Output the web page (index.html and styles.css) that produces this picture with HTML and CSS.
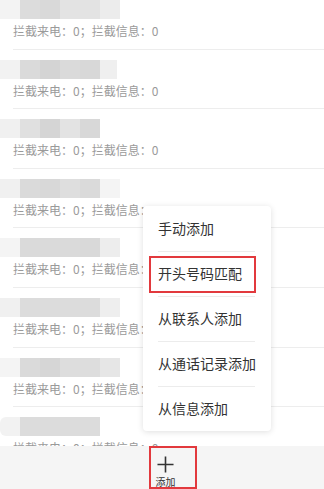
FILE: index.html
```html
<!DOCTYPE html>
<html lang="zh-CN">
<head>
<meta charset="utf-8">
<title>拦截名单</title>
<link rel="stylesheet" href="styles.css">
</head>
<body>
<div class="page">
  <div class="list-wrap">
    <ul class="list">
      <li class="row"><div class="name n1"></div><div class="stat">拦截来电：0；拦截信息：0</div></li>
      <li class="row"><div class="name n2"></div><div class="stat">拦截来电：0；拦截信息：0</div></li>
      <li class="row"><div class="name n3"></div><div class="stat">拦截来电：0；拦截信息：0</div></li>
      <li class="row"><div class="name n4"></div><div class="stat">拦截来电：0；拦截信息：0</div></li>
      <li class="row"><div class="name n5"></div><div class="stat">拦截来电：0；拦截信息：0</div></li>
      <li class="row"><div class="name n6"></div><div class="stat">拦截来电：0；拦截信息：0</div></li>
      <li class="row"><div class="name n7"></div><div class="stat">拦截来电：0；拦截信息：0</div></li>
      <li class="row"><div class="name n8"></div><div class="stat">拦截来电：0；拦截信息：0</div></li>
    </ul>
  </div>
  <div class="bar">
    <div class="add">
      <svg class="plus" viewBox="0 0 18 18" width="17" height="17" aria-hidden="true">
        <path d="M9 0.5V17.5M0.5 9H17.5" stroke="#333" stroke-width="1.7" fill="none"/>
      </svg>
      <span class="add-label">添加</span>
    </div>
  </div>
  <div class="menu">
    <div class="item">手动添加</div>
    <div class="item">开头号码匹配<span class="mark"></span></div>
    <div class="item">从联系人添加</div>
    <div class="item">从通话记录添加</div>
    <div class="item">从信息添加</div>
  </div>
</div>
</body>
</html>
```
FILE: styles.css
```css
* { box-sizing: border-box; }
html, body { margin: 0; padding: 0; background: #fff; }
body {
  font-family: "Noto Sans CJK SC", "Noto Sans", sans-serif;
  width: 324px;
  height: 489px;
  overflow: hidden;
}
.page {
  position: relative;
  display: flex;
  flex-direction: column;
  height: 489px;
}
.list-wrap {
  flex: 1;
  overflow: hidden;
}
.list {
  list-style: none;
  margin: -10px 0 0 0;
  padding: 0;
}
.row {
  height: 59.6px;
  margin-left: 13px;
  padding-top: 10px;
  border-bottom: 1px solid #ededed;
}
.name {
  width: 120px;
  height: 19px;
  margin-left: -13px;
}
.n1 { background: linear-gradient(90deg, #f3f3f3 0 20px, #dcdcdc 20px 40px, #d9d9d9 40px 60px, #e3e3e3 60px 100px, #ececec 100px 120px); }
.n2 { background: linear-gradient(90deg, #f2f2f2 0 20px, #dadada 20px 40px, #d4d4d4 40px 60px, #dadada 60px 80px, #d8d8d8 80px 100px, #efefef 100px 117px, #fff 117px); }
.n3 { background: linear-gradient(90deg, #f0f0f0 0 20px, #e0e0e0 20px 40px, #d5d5d5 40px 60px, #e3e3e3 60px 80px, #d8d8d8 80px 100px, #fff 100px); }
.n4 { background: linear-gradient(90deg, #f0f0f0 0 20px, #dadada 20px 40px, #d8d8d8 40px 60px, #dedede 60px 80px, #dadada 80px 100px, #f4f4f4 100px 120px); }
.n5 { background: linear-gradient(90deg, #f4f4f4 0 20px, #dadada 20px 80px, #d9d9d9 80px 100px, #ededed 100px 120px); }
.n6 { background: linear-gradient(90deg, #f0f0f0 0 20px, #dcdcdc 20px 100px, #eeeeee 100px 120px); }
.n7 { background: linear-gradient(90deg, #f4f4f4 0 20px, #dadada 20px 40px, #d6d6d6 40px 60px, #dddddd 60px 100px, #e6e6e6 100px 120px); }
.n8 { background: linear-gradient(90deg, #f2f2f2 0 20px, #dcdcdc 20px 100px, #fff 100px); border-radius: 6px 0 0 6px; }
.stat {
  margin-top: 3px;
  font-size: 12px;
  line-height: 18px;
  color: #9a9a9a;
  white-space: nowrap;
}
.bar {
  height: 43px;
  flex: none;
  background: #f5f5f5;
  display: flex;
  padding-left: 149px;
}
.add {
  width: 48px;
  height: 43px;
  border: 2px solid #e2393d;
  padding: 8px 15px 0 0;
  display: flex;
  flex-direction: column;
  align-items: center;
}
.plus { display: block; }
.add-label {
  margin-top: 3px;
  font-size: 10px;
  line-height: 11px;
  color: #333;
}
.menu {
  position: absolute;
  left: 143px;
  top: 206px;
  width: 128px;
  background: #fff;
  border-radius: 4px;
  box-shadow: 0 1px 6px rgba(0, 0, 0, 0.13);
}
.item {
  position: relative;
  height: 45px;
  line-height: 45px;
  padding-left: 15px;
  font-size: 14px;
  color: #333;
  white-space: nowrap;
}
.item + .item::before {
  content: "";
  position: absolute;
  left: 15px;
  right: 16px;
  top: 0;
  border-top: 1px solid #ececec;
}
.mark {
  position: absolute;
  left: 6px;
  top: 5px;
  width: 107px;
  height: 37px;
  border: 2px solid #e2393d;
}
```
